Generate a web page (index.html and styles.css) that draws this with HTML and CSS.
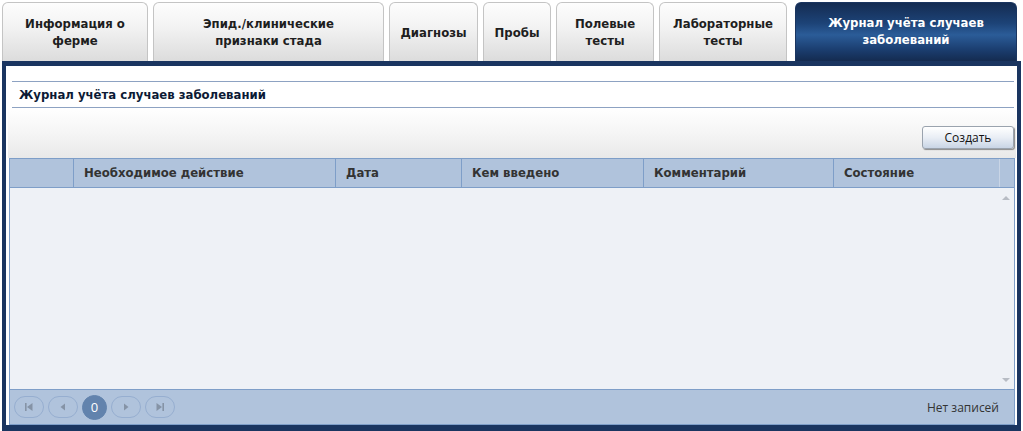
FILE: index.html
```html
<!DOCTYPE html>
<html lang="ru">
<head>
<meta charset="utf-8">
<title>Журнал учёта случаев заболеваний</title>
<link rel="stylesheet" href="styles.css">
</head>
<body>
<div class="tabs">
  <div class="tab t1">Информация о<br>ферме</div>
  <div class="tab t2">Эпид./клинические<br>признаки стада</div>
  <div class="tab t3">Диагнозы</div>
  <div class="tab t4">Пробы</div>
  <div class="tab t5">Полевые<br>тесты</div>
  <div class="tab t6">Лабораторные<br>тесты</div>
  <div class="tab t7 active">Журнал учёта случаев<br>заболеваний</div>
</div>
<div class="panel">
  <div class="inner">
    <div class="title">Журнал учёта случаев заболеваний</div>
    <div class="toolbar"><button class="btn">Создать</button></div>
    <div class="grid">
      <div class="ghead">
        <div class="hc c1"></div>
        <div class="hc c2">Необходимое действие</div>
        <div class="hc c3">Дата</div>
        <div class="hc c4">Кем введено</div>
        <div class="hc c5">Комментарий</div>
        <div class="hc c6">Состояние</div>
        <div class="hc c7"></div>
      </div>
      <div class="gbody">
        <div class="scroll">
          <span class="arr up"></span>
          <span class="arr down"></span>
        </div>
      </div>
      <div class="gfoot">
        <div class="pager">
          <span class="pb"><svg width="10" height="10" viewBox="0 0 10 10"><rect x="1" y="1" width="1.6" height="8" fill="#8593a6"/><path d="M8.5 1 L3 5 L8.5 9 Z" fill="#8593a6"/></svg></span>
          <span class="pb"><svg width="10" height="10" viewBox="0 0 10 10"><path d="M7 1.5 L2.5 5 L7 8.5 Z" fill="#8593a6"/></svg></span>
          <span class="pb cur">0</span>
          <span class="pb"><svg width="10" height="10" viewBox="0 0 10 10"><path d="M3 1.5 L7.5 5 L3 8.5 Z" fill="#8593a6"/></svg></span>
          <span class="pb"><svg width="10" height="10" viewBox="0 0 10 10"><path d="M1.5 1 L7 5 L1.5 9 Z" fill="#8593a6"/><rect x="7.4" y="1" width="1.6" height="8" fill="#8593a6"/></svg></span>
        </div>
        <div class="count">Нет записей</div>
      </div>
    </div>
  </div>
</div>
</body>
</html>
```
FILE: styles.css
```css
html, body {
  margin: 0;
  padding: 0;
  background: #ffffff;
}
body {
  width: 1023px;
  height: 431px;
  overflow: hidden;
  font-family: "DejaVu Sans Condensed", "DejaVu Sans", sans-serif;
}
.tabs {
  display: flex;
  gap: 5px;
  padding: 2px 0 0 2px;
  height: 59px;
  box-sizing: content-box;
}
.tab {
  box-sizing: border-box;
  height: 59px;
  flex: none;
  display: flex;
  align-items: center;
  justify-content: center;
  text-align: center;
  font-weight: bold;
  font-size: 13px;
  line-height: 17px;
  color: #1e1e1e;
  border: 1px solid #c4c4c4;
  border-bottom: none;
  border-radius: 6px 6px 0 0;
  background: linear-gradient(#fdfdfd 0%, #f3f3f3 40%, #dcdcdc 100%);
}
.t1 { width: 146px; }
.t2 { width: 231px; }
.t3 { width: 89px; }
.t4 { width: 68px; }
.t5 { width: 98px; }
.t6 { width: 128px; }
.t7 { width: 222px; margin-left: 3px; padding-bottom: 3px; }
.tab.active {
  color: #ffffff;
  border-color: #1a3560;
  background: linear-gradient(#142c52 0%, #1d4377 35%, #2b5c98 55%, #1b3e70 80%, #142b50 100%);
}
.panel {
  margin: 0 2px 0 2px;
  height: 370px;
  box-sizing: border-box;
  border: 4px solid #1a3560;
  border-top-width: 5px;
  border-bottom-width: 6px;
  background: #ffffff;
}
.inner {
  padding: 15px 1px 0 3px;
  display: flex;
  flex-direction: column;
  height: 100%;
  box-sizing: border-box;
}
.title {
  margin: 0 2px 0 3px;
  height: 27px;
  box-sizing: border-box;
  border-top: 1px solid #8da2c2;
  border-bottom: 1px solid #8da2c2;
  padding-left: 7px;
  font-weight: bold;
  font-size: 13px;
  line-height: 25px;
  color: #0c1a35;
}
.toolbar {
  margin-left: -1px;
  height: 50px;
  background: linear-gradient(#ffffff 0%, #f6f6f6 45%, #e9e9e9 100%);
  display: flex;
  justify-content: flex-end;
  align-items: flex-end;
  padding: 0 2px 9px 0;
  box-sizing: border-box;
}
.btn {
  width: 92px;
  height: 23px;
  box-sizing: border-box;
  border: 1px solid #9aa3ae;
  border-radius: 3px;
  background: linear-gradient(#ffffff 0%, #e9eef5 50%, #c9d5e5 100%);
  box-shadow: 1px 1px 1px #8a8a8a;
  font-family: "Open Sans", "Noto Sans", sans-serif;
  font-size: 12px;
  color: #111;
  padding: 0;
}
.grid {
  border: 1px solid #7e9ec8;
  display: flex;
  flex-direction: column;
  flex: 1;
  margin-right: 1px;
}
.ghead {
  display: flex;
  height: 29px;
  background: #b0c3dc;
  border-bottom: 1px solid #7e9ec8;
  box-sizing: border-box;
}
.hc {
  box-sizing: border-box;
  border-right: 1px solid #7e9ec8;
  padding-left: 10px;
  font-weight: bold;
  font-size: 13px;
  line-height: 28px;
  color: #333333;
  flex: none;
}
.c1 { width: 64px; }
.c2 { width: 262px; }
.c3 { width: 126px; }
.c4 { width: 182px; }
.c5 { width: 190px; }
.c6 { width: 166px; border-right-color: #c9d5e6; }
.c7 { flex: 1; border-right: none; }
.gbody {
  flex: 1;
  background: #eef1f6;
  display: flex;
  justify-content: flex-end;
}
.scroll {
  width: 16px;
  display: flex;
  flex-direction: column;
  justify-content: space-between;
  align-items: center;
  padding: 8px 0 7px;
}
.arr {
  width: 0;
  height: 0;
  border-left: 4px solid transparent;
  border-right: 4px solid transparent;
}
.arr.up { border-bottom: 4px solid #b7bcc4; }
.arr.down { border-top: 4px solid #b7bcc4; }
.gfoot {
  height: 35px;
  box-sizing: border-box;
  border-top: 1px solid #7e9ec8;
  background: #b0c3dc;
  display: flex;
  align-items: center;
  justify-content: space-between;
  padding: 0 15px 0 4px;
}
.pager {
  display: flex;
  gap: 4px;
  align-items: center;
}
.pb {
  width: 30px;
  height: 22px;
  box-sizing: border-box;
  border: 1px solid #96aed0;
  border-radius: 11px;
  display: flex;
  align-items: center;
  justify-content: center;
}
.pb.cur {
  width: 25px;
  height: 25px;
  border-radius: 50%;
  border-color: #6283ad;
  background: #6283ad;
  color: #ffffff;
  font-family: "Open Sans", "Noto Sans", sans-serif;
  font-size: 13px;
}
.count {
  font-family: "Open Sans", "Noto Sans", sans-serif;
  font-size: 12px;
  color: #333333;
}
```
